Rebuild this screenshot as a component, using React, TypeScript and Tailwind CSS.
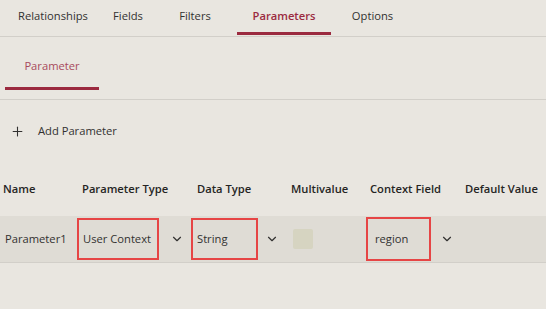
import { ChevronDown, Plus } from "lucide-react";

const tabs = [
  { label: "Relationships", w: "w-[100px]" },
  { label: "Fields", w: "w-[50px]" },
  { label: "Filters", w: "w-[84px]" },
  { label: "Parameters", w: "w-[94px]", active: true },
  { label: "Options", w: "w-[83px]" },
];

const Chevron = () => <ChevronDown className="w-[14px] h-[14px] text-[#323130]" strokeWidth={2} />;

export default function App() {
  return (
    <div
      className="w-[546px] h-[309px] bg-[#e9e6e0] text-[11.2px] text-[#323130] overflow-hidden"
      style={{ fontFamily: "'Open Sans', 'Noto Sans', sans-serif" }}
    >
      {/* 상단 탭 */}
      <div className="flex h-[37px] border-b border-[#d2cfc9] pl-[3px]">
        {tabs.map((t) => (
          <div
            key={t.label}
            className={`${t.w} flex items-center justify-center h-full relative ${
              t.active ? "text-[#9b2a3f] font-semibold" : ""
            }`}
          >
            <span className="-mt-[3px]">{t.label}</span>
            {t.active && <div className="absolute left-0 right-0 bottom-[1px] h-[3px] bg-[#9b2a3f]" />}
          </div>
        ))}
      </div>

      {/* 서브 탭 */}
      <div className="h-[63px] border-b border-[#d2cfc9] pl-[5px]">
        <div className="w-[94px] h-[53px] flex flex-col">
          <div className="flex-1 flex items-center justify-center text-[#a84a5c] pt-[8px]">Parameter</div>
          <div className="h-[3px] bg-[#9b2a3f]" />
        </div>
      </div>

      {/* 파라미터 추가 */}
      <div className="flex items-center h-[62px] pl-[10px] gap-[13px]">
        <Plus className="w-[15px] h-[15px] text-[#323130]" strokeWidth={1.7} />
        <span>Add Parameter</span>
      </div>

      {/* 헤더 */}
      <div className="flex items-center h-[54px] font-semibold text-[#252423]">
        <div className="w-[77px] pl-[3px]">Name</div>
        <div className="w-[114px] pl-[5px]">Parameter Type</div>
        <div className="w-[98px] pl-[6px]">Data Type</div>
        <div className="w-[77px] pl-[2px]">Multivalue</div>
        <div className="w-[96px] pl-[4px]">Context Field</div>
        <div className="flex-1 pl-[3px]">Default Value</div>
      </div>

      {/* 데이터 행 */}
      <div className="flex items-center h-[47px] bg-[#dfdcd5] border-b border-[#d2cfc9]">
        <div className="w-[77px] pl-[5px]">Parameter1</div>
        <div className="w-[114px] flex items-center">
          <div className="w-[82px] h-[42px] border-2 border-[#e64545] flex items-center pl-[4px]">User Context</div>
          <div className="flex-1 flex justify-center pl-[3px]">
            <Chevron />
          </div>
        </div>
        <div className="w-[98px] flex items-center">
          <div className="w-[67px] h-[42px] border-2 border-[#e64545] flex items-center pl-[4px]">String</div>
          <div className="flex-1 flex justify-center pr-[4px]">
            <Chevron />
          </div>
        </div>
        <div className="w-[77px] pl-[4px]">
          <div className="w-[20px] h-[20px] rounded-[2px] bg-[#d6d4c1]" />
        </div>
        <div className="w-[96px] flex items-center">
          <div className="w-[65px] h-[44px] border-2 border-[#e64545] flex items-center pl-[7px]">region</div>
          <div className="flex-1 flex justify-center">
            <Chevron />
          </div>
        </div>
        <div className="flex-1" />
      </div>
    </div>
  );
}
